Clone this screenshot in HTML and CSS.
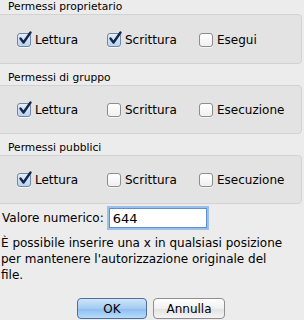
FILE: index.html
```html
<!DOCTYPE html>
<html lang="it">
<head>
  <meta charset="UTF-8">
  <title>Permessi</title>
  <link rel="stylesheet" href="styles.css">
</head>
<body>

  <div class="gruppo">
    <h2>Permessi proprietario</h2>
    <div class="riquadro">
      <label class="voce"><span class="check attivo"><svg viewBox="0 0 16 16"><path d="M3.5 7.5 L6.5 11.5 L13.5 1.5"/></svg></span>Lettura</label>
      <label class="voce"><span class="check attivo"><svg viewBox="0 0 16 16"><path d="M3.5 7.5 L6.5 11.5 L13.5 1.5"/></svg></span>Scrittura</label>
      <label class="voce"><span class="check"></span>Esegui</label>
    </div>
  </div>

  <div class="gruppo">
    <h2>Permessi di gruppo</h2>
    <div class="riquadro">
      <label class="voce"><span class="check attivo"><svg viewBox="0 0 16 16"><path d="M3.5 7.5 L6.5 11.5 L13.5 1.5"/></svg></span>Lettura</label>
      <label class="voce"><span class="check"></span>Scrittura</label>
      <label class="voce"><span class="check"></span>Esecuzione</label>
    </div>
  </div>

  <div class="gruppo">
    <h2>Permessi pubblici</h2>
    <div class="riquadro">
      <label class="voce"><span class="check attivo"><svg viewBox="0 0 16 16"><path d="M3.5 7.5 L6.5 11.5 L13.5 1.5"/></svg></span>Lettura</label>
      <label class="voce"><span class="check"></span>Scrittura</label>
      <label class="voce"><span class="check"></span>Esecuzione</label>
    </div>
  </div>

  <div class="valore">
    <span>Valore numerico:</span>
    <input type="text" value="644">
  </div>

  <p class="nota">È possibile inserire una x in qualsiasi posizione per mantenere l'autorizzazione originale del file.</p>

  <div class="azioni">
    <button class="btn primario">OK</button>
    <button class="btn">Annulla</button>
  </div>

</body>
</html>
```

FILE: styles.css
```css
* { box-sizing: border-box; margin: 0; padding: 0; }

body {
  font-family: "DejaVu Sans", sans-serif;
  font-size: 12px;
  color: #000;
  background-color: #ececec;
  width: 304px;
  height: 320px;
  overflow: hidden;
}

.gruppo h2 {
  font-size: 10.7px;
  font-weight: normal;
  height: 14px;
  line-height: 14px;
  padding-left: 8px;
}

.gruppo + .gruppo h2 {
  margin-top: 6px;
  height: 15px;
  line-height: 16px;
}

.riquadro {
  margin: 0 2px 0 -4px;
  height: 50px;
  background-color: #e3e3e3;
  border: 1px solid #d2d2d2;
  border-radius: 4px;
  display: grid;
  grid-template-columns: 90px 92px auto;
  align-items: center;
  padding-left: 20px;
  padding-top: 1px;
}

.gruppo + .gruppo .riquadro {
  height: 49px;
}

.voce {
  display: flex;
  align-items: center;
  gap: 4px;
  font-size: 12px;
}

.check {
  position: relative;
  width: 14px;
  height: 14px;
  border: 1px solid #8d8d8d;
  border-radius: 3px;
  background: linear-gradient(#ffffff, #f0f0f0);
  box-shadow: 0 1px 0 rgba(255, 255, 255, 0.6);
}

.check.attivo {
  background: linear-gradient(#e4effa, #b9d3ee);
  border-color: #6f86a5;
}

.check svg {
  position: absolute;
  left: -1px;
  top: -3px;
  width: 16px;
  height: 16px;
  overflow: visible;
}

.check svg path {
  fill: none;
  stroke: #15264a;
  stroke-width: 2.4;
  stroke-linecap: round;
  stroke-linejoin: round;
}

.valore {
  display: flex;
  align-items: center;
  gap: 5px;
  margin-top: 2px;
  padding-left: 2px;
  height: 24px;
}

.valore input {
  width: 98px;
  height: 20px;
  font-family: "DejaVu Sans", sans-serif;
  font-size: 13px;
  padding: 0 3px;
  border: 1px solid #5f8fcf;
  outline: none;
  box-shadow: 0 0 0 2px #9cc0ec;
  background: #fff;
}

.nota {
  margin-top: 5px;
  padding-left: 1px;
  width: 287px;
  line-height: 16px;
  font-size: 12px;
}

.azioni {
  display: flex;
  gap: 6px;
  margin-top: 15px;
  padding-left: 77px;
}

.btn {
  height: 21px;
  border: 1px solid #8e8e8e;
  border-radius: 4px;
  background: linear-gradient(#ffffff, #f0f0f0 50%, #e2e2e2 51%, #f4f4f4);
  font-family: "DejaVu Sans", sans-serif;
  font-size: 12px;
  width: 72px;
}

.btn.primario {
  width: 70px;
  border-color: #4e6f9d;
  background: linear-gradient(#cfe4fa, #a4cbf2 50%, #8bbcf0 51%, #b8dcfc);
}
```
